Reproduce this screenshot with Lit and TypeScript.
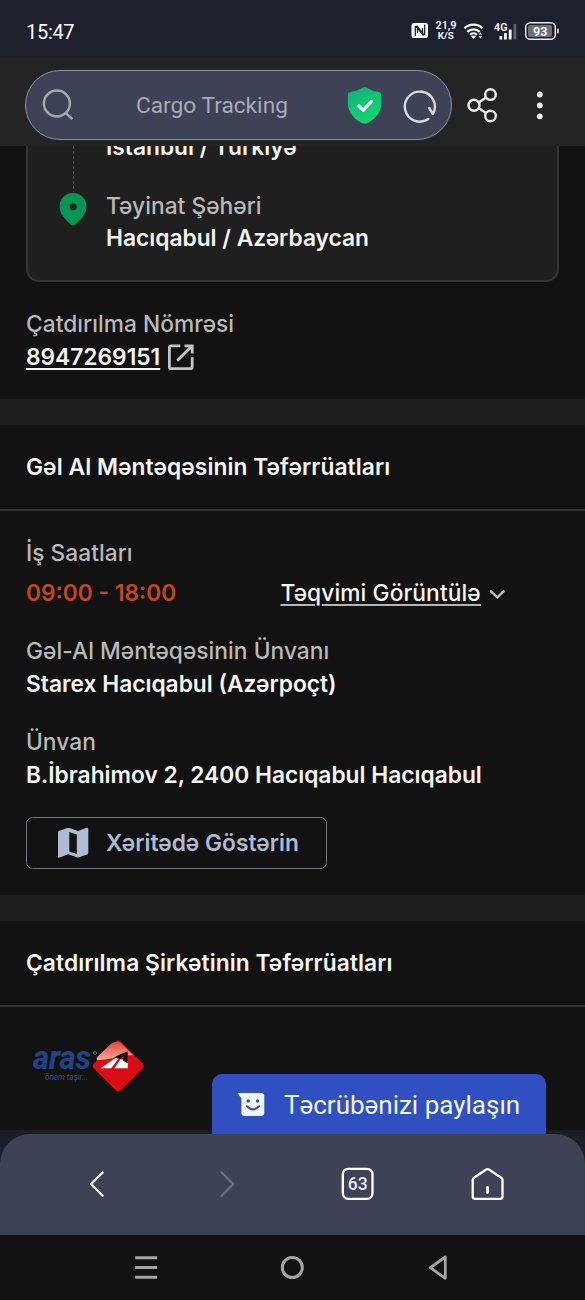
import { LitElement, html, css } from "lit";
import { customElement } from "lit/decorators.js";

@customElement("status-bar")
class StatusBar extends LitElement {
  static styles = css`
    :host { display: flex; height: 58px; background: #1e212d; color: #fff; font-family: Roboto, sans-serif; }
    .time { flex: 1; padding-left: 26px; font-size: 20px; line-height: 64px; letter-spacing: -0.300px; }
    .icons { width: 180px; height: 58px; }
    .f { font-family: Roboto, sans-serif; font-weight: 600; fill: #fff; }
  `;
  render() {
    return html`
      <div class="time">15:47</div>
      <svg class="icons" viewBox="405 0 180 58">
        <rect x="411.500" y="23" width="16.500" height="15" rx="2.500" fill="#fff" />
        <path d="M415.300 36V25.700M416 26l6.500 8.300V28M424.700 24.500V35M424 35l-6.500-8.300V33" fill="none" stroke="#1e212d" stroke-width="1.300" />
        <text class="f" x="446" y="29" font-size="10" text-anchor="middle" textLength="21" lengthAdjust="spacingAndGlyphs">21,9</text>
        <text class="f" x="445.800" y="39" font-size="8.600" text-anchor="middle" textLength="16" lengthAdjust="spacingAndGlyphs">K/S</text>
        <g fill="none" stroke="#fff" stroke-width="2.300">
          <path d="M464.500 28.300a13 13 0 0 1 18 0" />
          <path d="M467.300 31.800a9 9 0 0 1 12.400 0" />
          <path d="M470 34.800a5 5 0 0 1 7 0" />
        </g>
        <path d="M470.800 35.800h5.400l-2.700 3.200z" fill="#fff" />
        <path d="M478.600 34.600l1.800-2.200 1.800 2.200zM478.600 36.200l1.800 2.400 1.800-2.400z" fill="#fff" />
        <text class="f" x="494" y="31" font-size="11" textLength="13.500" lengthAdjust="spacingAndGlyphs">4G</text>
        <g fill="#fff">
          <rect x="499.500" y="36" width="2.800" height="3.500" rx=".6" />
          <rect x="504" y="33" width="2.800" height="6.500" rx=".6" />
          <rect x="508.800" y="29.500" width="2.800" height="10" rx=".6" />
          <rect x="513.500" y="24" width="2.800" height="15.500" rx=".6" fill="#61636c" />
        </g>
        <rect x="525.700" y="22.800" width="29.600" height="16.400" rx="4.500" fill="none" stroke="#e8e8ec" stroke-width="1.500" />
        <rect x="528" y="25" width="24" height="12" rx="2" fill="#6d6f78" />
        <rect x="557" y="28.500" width="1.800" height="5" rx=".8" fill="#d8d8dc" />
        <text class="f" x="540.200" y="35.600" font-size="12.600" text-anchor="middle" textLength="14.500">93</text>
      </svg>
    `;
  }
}

@customElement("browser-toolbar")
class BrowserToolbar extends LitElement {
  static styles = css`
    :host { display: flex; height: 88px; background: #242424; box-sizing: border-box; padding: 12px 0 0 25px; font-family: Roboto, sans-serif; }
    .pill { box-sizing: border-box; width: 427px; height: 70px; border: 1.300px solid #8d91a5; border-radius: 35px; background: #3d4257; display: flex; align-items: center; padding-left: 16px; }
    .search { width: 34px; height: 34px; }
    .title { width: 152px; margin-left: 60px; padding-top: 2px; font-size: 22.700px; line-height: 34px; color: #a8abb4; white-space: nowrap; }
    .shield { width: 34px; height: 38px; margin-left: 59px; }
    .reload { width: 36px; height: 36px; margin-left: 21.500px; margin-top: 2px; }
    .share { width: 34px; height: 38px; margin: 17px 0 0 14px; }
    .more { width: 10px; height: 32px; margin: 20px 0 0 35px; }
  `;
  render() {
    return html`
      <div class="pill">
        <svg class="search" viewBox="42 88 34 34" fill="none" stroke="#a6a9b4" stroke-width="2.400">
          <circle cx="56.900" cy="103.500" r="13" /><path d="M66 113.200l6.300 6" />
        </svg>
        <span class="title">Cargo Tracking</span>
        <svg class="shield" viewBox="347 86 34 38">
          <defs><linearGradient id="g" x1="0" y1="0" x2=".4" y2="1"><stop offset="0" stop-color="#17a97e" /><stop offset=".5" stop-color="#12c473" /><stop offset="1" stop-color="#12d46b" /></linearGradient></defs>
          <path d="M364.500 87q1.200 0 2.500 .9 5.500 3.300 12 4.200 2.300.4 2.300 2.700v8.400c0 9.600-6.600 15.800-14.200 19.900q-2.600 1.200-5.200 0C354.500 119 347.900 112.800 347.900 103.200v-8.400q0-2.300 2.300-2.700 6.300-.9 11.800-4.200 1.300-.9 2.500-.9z" fill="url(#g)" />
          <path d="M358.800 106l4.600 4.200 8-8.700" fill="none" stroke="#fff" stroke-width="3.200" stroke-linecap="round" stroke-linejoin="round" />
        </svg>
        <svg class="reload" viewBox="403 88 36 36" fill="none" stroke="#d9dae0" stroke-width="2.400" stroke-linecap="round" stroke-linejoin="round">
          <path d="M428.300 119a15 15 0 1 1 4.600-5L429.200 108" />
        </svg>
      </div>
      <svg class="share" viewBox="466 87 34 38" fill="none" stroke="#ececec" stroke-width="2.400">
        <circle cx="474" cy="105.300" r="5.500" /><circle cx="490.500" cy="94.600" r="5.300" /><circle cx="490.500" cy="116" r="5.300" />
        <path d="M478.800 102.400l7.200-5M478.800 108.300l7.200 4.800" />
      </svg>
      <svg class="more" viewBox="535 90 10 32" fill="#f1f1f1">
        <circle cx="539.800" cy="94.500" r="2.900" /><circle cx="539.800" cy="105.400" r="2.900" /><circle cx="539.800" cy="116.300" r="2.900" />
      </svg>
    `;
  }
}

@customElement("tracking-page")
class TrackingPage extends LitElement {
  static styles = css`
    :host { display: block; height: 984px; overflow: hidden; background: #121212; color: #f6f6f6; font-family: Inter, sans-serif; font-size: 22.750px; line-height: 32.500px; white-space: nowrap; }
    .label { color: #b9b9ba; font-weight: 480; letter-spacing: 0.030px; }
    .value { font-weight: 600; }
    .top { padding: 0 26px 26px; height: 242.200px; }
    .card { box-sizing: border-box; height: 151.200px; margin-top: -15px; border: 2px solid #353535; border-top: 0; border-radius: 0 0 13px 13px; background: #1f1f1f; display: flex; padding-left: 31px; }
    .route { width: 28px; display: flex; flex-direction: column; align-items: center; margin-right: 19px; }
    .dash { width: 1px; height: 61px; background: repeating-linear-gradient(#4e4e4e 0 3px, #1f1f1f 3px 5px); margin-left: 1px; }
    .pin { width: 28px; height: 34px; }
    .stops { display: flex; flex-direction: column; }
    .stops .label { margin-top: 26px; }
    .delivery { margin-top: 26.300px; }
    .number { display: flex; }
    .link { text-decoration: underline; text-decoration-thickness: 1.700px; text-underline-offset: 3px; text-decoration-skip-ink: none; }
    .open { width: 28px; height: 28px; margin: 2px 0 0 7px; }
    .band { height: 26px; background: #1f1f1f; }
    .heading { box-sizing: border-box; height: 86px; padding: 26px 26px 0; border-bottom: 2px solid #323232; font-weight: 600; letter-spacing: 0.080px; }
    .body { padding: 26px; display: flex; flex-direction: column; gap: 26px; height: 384px; box-sizing: border-box; }
    .hours { display: flex; margin-top: 7px; }
    .open-hours { width: 254.500px; color: #c2471a; font-weight: 600; }
    .calendar { font-weight: 500; letter-spacing: 0.090px; text-decoration: underline; text-decoration-thickness: 1.600px; text-underline-offset: 3px; text-decoration-color: #b5b5b5; }
    .chev { width: 18px; height: 14px; margin: 10px 0 0 7px; }
    .mapbtn { box-sizing: border-box; width: 301px; height: 52px; border: 1.600px solid #747684; border-radius: 6.500px; display: flex; align-items: center; padding-left: 29px; color: #aebad3; font-weight: 600; }
    .map { width: 34px; height: 34px; margin-right: 16px; }
    .logo { display: block; width: 116px; height: 58px; margin: 29.500px 0 0 31px; }
    .brand { font-family: Roboto, sans-serif; font-style: italic; font-weight: 700; fill: #20448a; }
    .slogan { font-family: Roboto, sans-serif; font-style: italic; fill: #34508a; }
  `;
  render() {
    return html`
      <section class="top">
        <div class="card">
          <div class="route">
            <div class="dash"></div>
            <svg class="pin" viewBox="59 191 28 34"><path fill="#079653" fill-rule="evenodd" d="M73 192c7.600 0 13.500 5.700 13.500 13.400 0 6.900-5.500 12.500-10.900 17.900q-2.600 2.500-5.200 0C65 217.900 59.600 212.300 59.600 205.400 59.600 197.700 65.400 192 73 192zm.2 10.300a3.500 3.500 0 1 0 0 7 3.500 3.500 0 0 0 0-7z" /></svg>
          </div>
          <div class="stops">
            <span class="value">İstanbul / Türkiyə</span>
            <span class="label">Təyinat Şəhəri</span>
            <span class="value">Hacıqabul / Azərbaycan</span>
          </div>
        </div>
        <div class="delivery">
          <div class="label">Çatdırılma Nömrəsi</div>
          <div class="number">
            <span class="value link">8947269151</span>
            <svg class="open" viewBox="167 343 28 28" fill="none" stroke="#c4c4c8" stroke-width="2.800"><path d="M180.300 345.800h-9.200q-1.700 0-1.700 1.700v19.400q0 1.700 1.700 1.700h19.400q1.700 0 1.700-1.700v-9.700M184.500 345.800h7.700v7.700M191.500 346.500l-14.300 14.300" /></svg>
          </div>
        </div>
      </section>
      <div class="band"></div>
      <div class="heading">Gəl Al Məntəqəsinin Təfərrüatları</div>
      <section class="body">
        <div>
          <div class="label">İş Saatları</div>
          <div class="hours">
            <span class="open-hours">09:00 - 18:00</span>
            <span class="calendar">Təqvimi Görüntülə</span>
            <svg class="chev" viewBox="488 586 18 14" fill="none" stroke="#bfc0c4" stroke-width="2.400" stroke-linecap="round"><path d="M491 590.300l6.300 6 6.300-6" /></svg>
          </div>
        </div>
        <div>
          <div class="label">Gəl-Al Məntəqəsinin Ünvanı</div>
          <div class="value">Starex Hacıqabul (Azərpoçt)</div>
        </div>
        <div>
          <div class="label">Ünvan</div>
          <div class="value">B.İbrahimov 2, 2400 Hacıqabul Hacıqabul</div>
        </div>
        <div class="mapbtn">
          <svg class="map" viewBox="56 826 34 34" fill="#adbbd5"><path fill-rule="evenodd" d="M58 832.300q0-1 .9-1.300l8.500-2.900q1-.3 2 0l8.700 3 8.600-3.300q1.600-.5 1.600 1v24.300q0 1-.9 1.300l-8.500 2.900q-1 .3-2 0l-8.700-3-8.600 3.300q-1.600.5-1.600-1zM69.300 832v19.500l7.500 2.600v-19.500z" /></svg>
          <span>Xəritədə Göstərin</span>
        </div>
      </section>
      <div class="band"></div>
      <div class="heading">Çatdırılma Şirkətinin Təfərrüatları</div>
      <svg class="logo" viewBox="31 1036 116 58">
        <defs><linearGradient id="gloss" x1="0" y1="0" x2="0" y2="1"><stop offset="0" stop-color="#e5473d" /><stop offset="1" stop-color="#f4ac91" /></linearGradient></defs>
        <text class="brand" x="33" y="1067.500" font-size="33" textLength="58" lengthAdjust="spacingAndGlyphs">aras</text>
        <circle cx="95" cy="1052" r="1.500" fill="none" stroke="#6d7487" stroke-width=".8" />
        <text class="slogan" x="45" y="1079" font-size="9.500" textLength="43" lengthAdjust="spacingAndGlyphs">önem taşır...</text>
        <rect x="99.300" y="1046" width="38" height="38" rx="4" transform="rotate(45 118.300 1065)" fill="#da0d16" />
        <path d="M118.300 1041q1.500 0 3 1.400l12 12c-10-1.500-22 4.500-36 4.500-1.500-1-.5-2.500 1-4l13-12.500q3.500-1.500 7-1.400z" fill="url(#gloss)" />
        <path d="M100.700 1067.300l14-9.800q3-1.500 5.500-2.200l-9 12zM114.500 1067.300l6-9 7.300 1.500v7.500z" fill="#fff" />
        <path d="M127.700 1050.500v11.700l-5-2.700 1.500-5-4 3.500-6-1.500q6-4 13.500-6z" fill="#15100f" />
      </svg>
    `;
  }
}

@customElement("feedback-tab")
class FeedbackTab extends LitElement {
  static styles = css`
    :host { position: absolute; right: 39px; bottom: 0; width: 334px; height: 60px; box-sizing: border-box; border-radius: 10px 10px 0 0; background: #304fc0; color: #f4f6ff; display: flex; align-items: center; padding: 2px 0 0 26px; font-family: Roboto, sans-serif; font-size: 26px; white-space: nowrap; }
    .smile { width: 28px; height: 26px; margin-right: 18px; }
  `;
  render() {
    return html`
      <svg class="smile" viewBox="238 1092 28 26"><path fill="#f4f6ff" d="M239.300 1093h21.700q3.300 0 3.300 3.300v16.500q0 3.300-3.300 3.300h-16.300q-3.300 0-3.300-3.300v-14.500l-3-3.700q-.7-1.600.9-1.600z" /><circle cx="248.200" cy="1101" r="1.700" fill="#304fc0" /><circle cx="257.500" cy="1101" r="1.700" fill="#304fc0" /><path d="M247 1106.300q6 6.200 12 0" fill="none" stroke="#304fc0" stroke-width="2.100" stroke-linecap="round" /></svg>
      <span>Təcrübənizi paylaşın</span>
    `;
  }
}

@customElement("bottom-bars")
class BottomBars extends LitElement {
  static styles = css`
    :host { display: block; }
    .back { background: #1c1f2b; }
    .bar { height: 101px; background: #3d4257; border-radius: 30px 30px 0 0; }
    .row { display: block; width: 585px; }
    .nav { height: 65px; background: #121212; }
    .count { font-family: Roboto, sans-serif; font-weight: 500; fill: #e9eaf0; }
  `;
  render() {
    return html`
      <div class="back"><div class="bar">
        <svg class="row" height="101" viewBox="0 1134 585 101" fill="none" stroke="#fff" stroke-width="2.300" stroke-linecap="round" stroke-linejoin="round">
          <path d="M102.700 1172.500l-11.700 11.500 11.700 11.700" />
          <path d="M221.700 1172.500l11.700 11.500-11.700 11.700" stroke="#6c7081" />
          <rect x="342.800" y="1168.800" width="29.700" height="30" rx="5.500" />
          <text class="count" stroke="none" x="357.700" y="1190" font-size="17.500" text-anchor="middle">63</text>
          <path d="M472.700 1180q0-1.500 1.200-2.300l12-8q1.700-1.100 3.400 0l12 8q1.200.8 1.200 2.300v16.500q0 2.300-2.300 2.300h-25.200q-2.300 0-2.300-2.300z" /><path d="M487.600 1187.500v5" stroke-width="2.800" />
        </svg>
      </div></div>
      <div class="nav">
        <svg class="row" height="65" viewBox="0 1235 585 65" fill="none" stroke="#a5a5a5" stroke-width="3">
          <path d="M135.200 1257.700h22M135.200 1267.400h22M135.200 1277.200h22" />
          <circle cx="292.300" cy="1267.500" r="10" />
          <path d="M445.300 1257v21.300l-15-10.700z" stroke-linejoin="round" stroke-width="2.800" />
        </svg>
      </div>
    `;
  }
}

@customElement("app-root")
class AppRoot extends LitElement {
  static styles = css`
    :host { display: flex; flex-direction: column; width: 585px; height: 1300px; overflow: hidden; background: #121212; }
    .strip { position: relative; height: 4px; background: #1d1d1d; }
  `;
  render() {
    return html`
      <status-bar></status-bar>
      <browser-toolbar></browser-toolbar>
      <tracking-page></tracking-page>
      <div class="strip"><feedback-tab></feedback-tab></div>
      <bottom-bars></bottom-bars>
    `;
  }
}
